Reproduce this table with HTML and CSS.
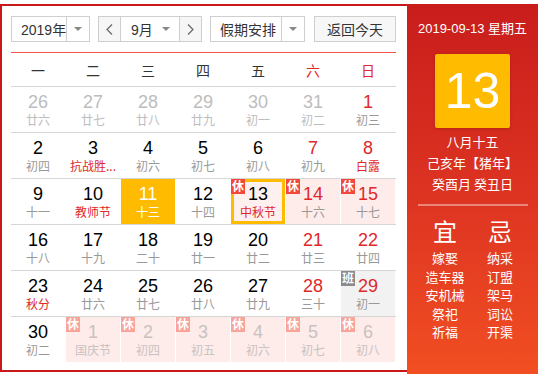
FILE: index.html
```html
<!DOCTYPE html>
<html lang="zh-CN">
<head>
<meta charset="utf-8">
<link rel="stylesheet" href="styles.css">
</head>
<body>
<div class="cal">
  <div class="main">
    <div class="toolbar">
      <div class="sel year"><span class="val">2019年</span><span class="drop"><i class="tri"></i></span></div>
      <div class="month-group">
        <span class="nav"><svg width="7" height="11" viewBox="0 0 7 11"><polyline points="6,0.5 1,5.5 6,10.5" fill="none" stroke="#666" stroke-width="1.2"/></svg></span>
        <span class="msel"><span class="val">9月</span><i class="tri"></i></span>
        <span class="nav"><svg width="7" height="11" viewBox="0 0 7 11"><polyline points="1,0.5 6,5.5 1,10.5" fill="none" stroke="#666" stroke-width="1.2"/></svg></span>
      </div>
      <div class="sel holiday"><span class="val">假期安排</span><span class="drop"><i class="tri"></i></span></div>
      <button class="today">返回今天</button>
    </div>
    <div class="weekdays">
      <span>一</span><span>二</span><span>三</span><span>四</span><span>五</span><span class="we">六</span><span class="we">日</span>
    </div>
    <div class="weeks">
      <div class="week">
        <div class="day other"><span class="n">26</span><span class="l">廿六</span></div>
        <div class="day other"><span class="n">27</span><span class="l">廿七</span></div>
        <div class="day other"><span class="n">28</span><span class="l">廿八</span></div>
        <div class="day other"><span class="n">29</span><span class="l">廿九</span></div>
        <div class="day other"><span class="n">30</span><span class="l">初一</span></div>
        <div class="day other"><span class="n">31</span><span class="l">初二</span></div>
        <div class="day red"><span class="n">1</span><span class="l">初三</span></div>
      </div>
      <div class="week">
        <div class="day"><span class="n">2</span><span class="l">初四</span></div>
        <div class="day"><span class="n">3</span><span class="l fest">抗战胜...</span></div>
        <div class="day"><span class="n">4</span><span class="l">初六</span></div>
        <div class="day"><span class="n">5</span><span class="l">初七</span></div>
        <div class="day"><span class="n">6</span><span class="l">初八</span></div>
        <div class="day red"><span class="n">7</span><span class="l">初九</span></div>
        <div class="day red"><span class="n">8</span><span class="l fest">白露</span></div>
      </div>
      <div class="week">
        <div class="day"><span class="n">9</span><span class="l">十一</span></div>
        <div class="day"><span class="n">10</span><span class="l fest">教师节</span></div>
        <div class="day picked"><span class="n">11</span><span class="l">十三</span></div>
        <div class="day"><span class="n">12</span><span class="l">十四</span></div>
        <div class="day rest today-cell"><i class="badge">休</i><span class="n">13</span><span class="l fest">中秋节</span></div>
        <div class="day rest red"><i class="badge">休</i><span class="n">14</span><span class="l">十六</span></div>
        <div class="day rest red"><i class="badge">休</i><span class="n">15</span><span class="l">十七</span></div>
      </div>
      <div class="week">
        <div class="day"><span class="n">16</span><span class="l">十八</span></div>
        <div class="day"><span class="n">17</span><span class="l">十九</span></div>
        <div class="day"><span class="n">18</span><span class="l">二十</span></div>
        <div class="day"><span class="n">19</span><span class="l">廿一</span></div>
        <div class="day"><span class="n">20</span><span class="l">廿二</span></div>
        <div class="day red"><span class="n">21</span><span class="l">廿三</span></div>
        <div class="day red"><span class="n">22</span><span class="l">廿四</span></div>
      </div>
      <div class="week">
        <div class="day"><span class="n">23</span><span class="l fest">秋分</span></div>
        <div class="day"><span class="n">24</span><span class="l">廿六</span></div>
        <div class="day"><span class="n">25</span><span class="l">廿七</span></div>
        <div class="day"><span class="n">26</span><span class="l">廿八</span></div>
        <div class="day"><span class="n">27</span><span class="l">廿九</span></div>
        <div class="day red"><span class="n">28</span><span class="l">三十</span></div>
        <div class="day work red"><i class="badge">班</i><span class="n">29</span><span class="l">初一</span></div>
      </div>
      <div class="week">
        <div class="day"><span class="n">30</span><span class="l">初二</span></div>
        <div class="day rest other"><i class="badge">休</i><span class="n">1</span><span class="l">国庆节</span></div>
        <div class="day rest other"><i class="badge">休</i><span class="n">2</span><span class="l">初四</span></div>
        <div class="day rest other"><i class="badge">休</i><span class="n">3</span><span class="l">初五</span></div>
        <div class="day rest other"><i class="badge">休</i><span class="n">4</span><span class="l">初六</span></div>
        <div class="day rest other"><i class="badge">休</i><span class="n">5</span><span class="l">初七</span></div>
        <div class="day rest other"><i class="badge">休</i><span class="n">6</span><span class="l">初八</span></div>
      </div>
    </div>
  </div>
  <div class="side">
    <div class="date-line">2019-09-13 星期五</div>
    <div class="big">13</div>
    <div class="lunar">
      <div>八月十五</div>
      <div>己亥年【猪年】</div>
      <div>癸酉月 癸丑日</div>
    </div>
    <div class="divider"></div>
    <div class="yiji">
      <div class="col">
        <div class="head">宜</div>
        <div>嫁娶</div><div>造车器</div><div>安机械</div><div>祭祀</div><div>祈福</div>
      </div>
      <div class="col">
        <div class="head">忌</div>
        <div>纳采</div><div>订盟</div><div>架马</div><div>词讼</div><div>开渠</div>
      </div>
    </div>
  </div>
</div>
</body>
</html>
```

FILE: styles.css
```css
* { box-sizing: border-box; }
html, body { margin: 0; padding: 0; background: #fff; }
body {
  font-family: "Liberation Sans", "Noto Sans CJK SC", sans-serif;
  color: #333;
  overflow: hidden;
}
.cal {
  display: flex;
  align-items: flex-start;
  width: 538px;
  margin-top: 4px;
}
.main {
  width: 407px;
  height: 368px;
  border: 2px solid #c9181c;
  border-right: none;
  padding: 10px 11px 8px 9px;
}
.toolbar {
  display: flex;
  height: 26px;
  gap: 8px;
  font-size: 14px;
}
.sel, .month-group, .today {
  height: 26px;
  border: 1px solid #cfcfcf;
  display: flex;
  align-items: stretch;
  background: #fff;
}
.year { width: 79px; }
.holiday { width: 95px; }
.sel .val {
  flex: 1;
  display: flex;
  align-items: center;
  padding-left: 9px;
  color: #333;
  white-space: nowrap;
}
.sel .drop {
  width: 23px;
  flex: none;
  border-left: 1px solid #cfcfcf;
  display: flex;
  align-items: center;
  justify-content: center;
}
.tri {
  display: block;
  width: 0;
  height: 0;
  border-left: 4px solid transparent;
  border-right: 4px solid transparent;
  border-top: 4px solid #888;
}
.month-group { width: 104px; }
.nav {
  width: 22px;
  background: #f6f6f6;
  display: flex;
  align-items: center;
  justify-content: center;
}
.month-group .nav:first-child { border-right: 1px solid #cfcfcf; }
.month-group .nav:last-child { border-left: 1px solid #cfcfcf; }
.msel {
  flex: 1;
  display: flex;
  align-items: center;
  padding-left: 10px;
  padding-right: 9px;
  white-space: nowrap;
}
.msel .val { flex: 1; }
.today {
  margin-left: auto;
  width: 82px;
  background: #f7f7f7;
  font-family: inherit;
  font-size: 14px;
  color: #333;
  justify-content: center;
  align-items: center;
  padding: 0;
  margin-right: 0;
}
.weekdays {
  margin-top: 10px;
  border-top: 1px solid #f3554b;
  height: 34px;
  display: grid;
  grid-template-columns: repeat(7, 54px);
  column-gap: 1px;
  align-items: center;
  font-size: 14px;
  color: #333;
  font-family: "Noto Sans CJK SC", sans-serif;
}
.weekdays span { text-align: center; padding-top: 1px; }
.weekdays .we { color: #e0282a; }
.week {
  border-top: 1px solid #d6d6d6;
  height: 46px;
  display: grid;
  grid-template-columns: repeat(7, 54px);
  column-gap: 1px;
}
.day {
  position: relative;
  height: 45px;
  display: flex;
  flex-direction: column;
  align-items: center;
  padding-top: 5px;
}
.day .n {
  font-size: 18px;
  line-height: 20px;
  color: #000;
}
.day .l {
  font-size: 12px;
  line-height: 16px;
  color: #999;
  white-space: nowrap;
  font-family: "Noto Sans CJK SC", sans-serif;
}
.day.red .n { color: #e0282a; }
.day .l.fest { color: #e0282a; }
.day.other .n, .day.other .l { color: #bdbdbd; }
.day.rest { background: #fdecea; }
.day.rest.other .n, .day.rest.other .l { color: #c9c1c0; }
.day.work { background: #f2f2f2; }
.day.picked { background: #ffbb00; }
.day.picked .n, .day.picked .l { color: #fff; }
.day.today-cell { box-shadow: inset 0 0 0 3px #ffbb00; background: #fdf0ef; }
.badge {
  position: absolute;
  left: 0;
  top: 0;
  width: 14px;
  height: 15px;
  font-style: normal;
  font-size: 12px;
  line-height: 14px;
  text-align: center;
  color: #fff;
  background: #f2493c;
  font-family: "Noto Sans CJK SC", sans-serif;
  font-weight: bold;
}
.day.other .badge { background: #f8a49b; }
.day.work .badge { background: #8a8a8a; }
.side {
  flex: 1;
  height: 372px;
  background: linear-gradient(180deg, #c81d1b 0%, #dc3322 50%, #f24f22 100%);
  color: #fff;
  display: flex;
  flex-direction: column;
  align-items: center;
  padding-top: 15px;
}
.date-line {
  font-size: 13px;
  line-height: 20px;
}
.big {
  margin-top: 15px;
  width: 75px;
  height: 74px;
  background: #ffbb00;
  border-radius: 2px;
  box-shadow: 0 1px 3px rgba(120, 30, 0, 0.35);
  font-size: 50px;
  line-height: 74px;
  text-align: center;
  color: #fff;
}
.lunar {
  margin-top: 3px;
  font-size: 13px;
  line-height: 21px;
  text-align: center;
  font-family: "Noto Sans CJK SC", sans-serif;
}
.divider {
  margin-top: 10px;
  width: 110px;
  height: 2px;
  background: rgba(255, 255, 255, 0.4);
}
.yiji {
  display: flex;
  width: 110px;
  margin-top: 10px;
  font-family: "Noto Sans CJK SC", sans-serif;
}
.yiji .col {
  width: 55px;
  text-align: center;
  font-size: 13px;
  line-height: 18.5px;
}
.yiji .head {
  font-size: 24px;
  line-height: 30px;
  margin-bottom: 3px;
}
```
